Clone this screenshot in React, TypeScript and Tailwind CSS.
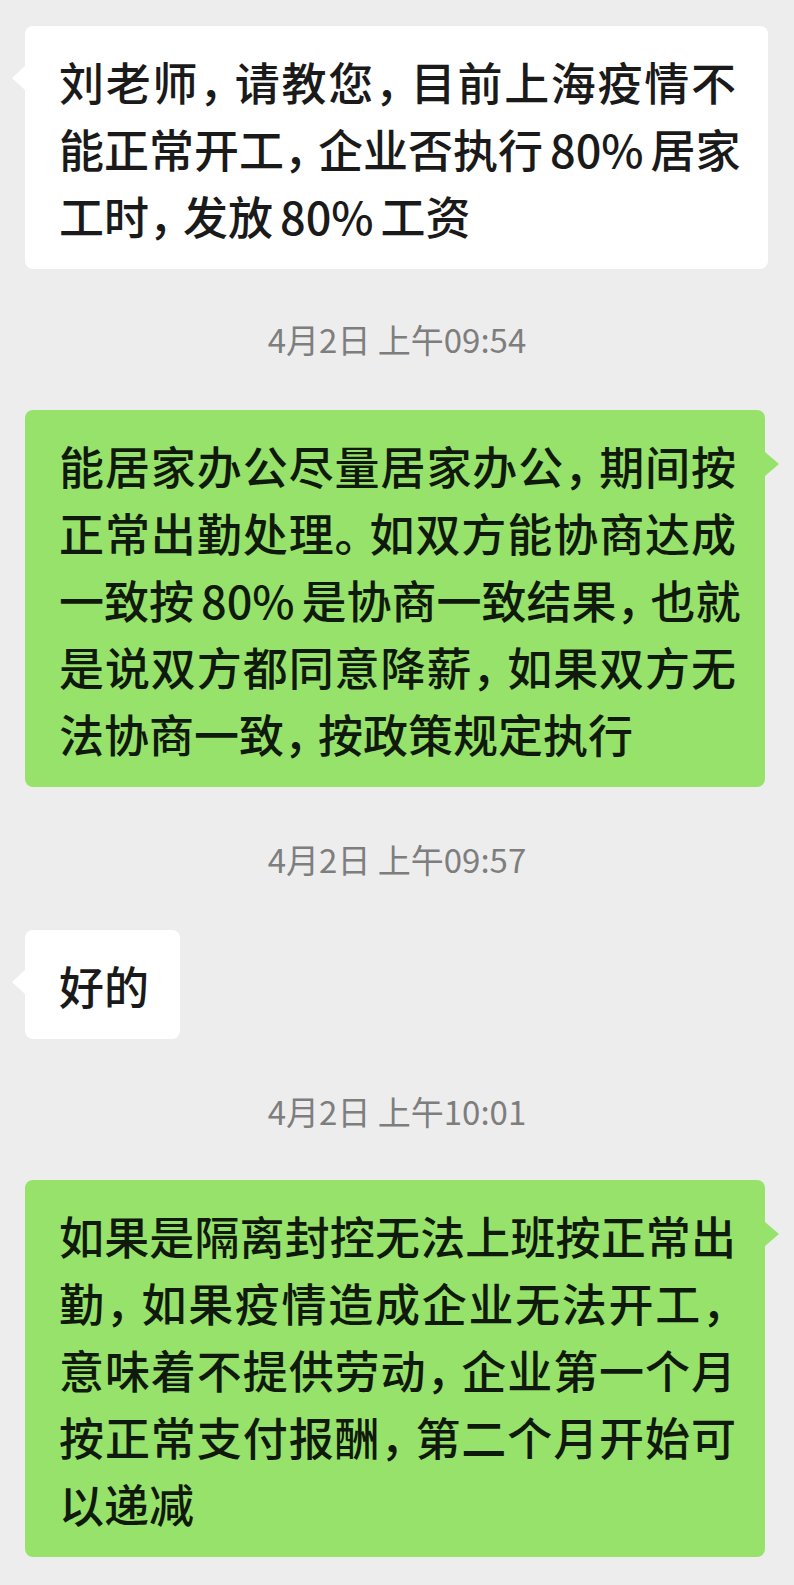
import React from 'react';

const FONT = '"Noto Sans CJK SC", "Noto Sans", sans-serif';

type Msg =
  | { kind: 'time'; text: string; mt: string }
  | { kind: 'in' | 'out'; lines: string[]; w: string; mt: string };

const messages: Msg[] = [
  {
    kind: 'in',
    w: 'w-[743px]',
    mt: 'mt-[26px]',
    lines: ['刘老师，请教您，目前上海疫情不', '能正常开工，企业否执行80%居家', '工时，发放80%工资'],
  },
  { kind: 'time', text: '4月2日 上午09:54', mt: 'mt-[51px]' },
  {
    kind: 'out',
    w: 'w-[740px]',
    mt: 'mt-[50px]',
    lines: [
      '能居家办公尽量居家办公，期间按',
      '正常出勤处理。如双方能协商达成',
      '一致按80%是协商一致结果，也就',
      '是说双方都同意降薪，如果双方无',
      '法协商一致，按政策规定执行',
    ],
  },
  { kind: 'time', text: '4月2日 上午09:57', mt: 'mt-[53px]' },
  { kind: 'in', w: 'w-[155px]', mt: 'mt-[50px]', lines: ['好的'] },
  { kind: 'time', text: '4月2日 上午10:01', mt: 'mt-[53px]' },
  {
    kind: 'out',
    w: 'w-[740px]',
    mt: 'mt-[48px]',
    lines: [
      '如果是隔离封控无法上班按正常出',
      '勤，如果疫情造成企业无法开工，',
      '意味着不提供劳动，企业第一个月',
      '按正常支付报酬，第二个月开始可',
      '以递减',
    ],
  },
];

// punctuation is squeezed a bit and "80%" gets some air, like the phone's renderer
function renderLine(s: string) {
  return s.split(/(，|。|80%)/).map((part, i) => {
    if (part === '，' || part === '。') {
      return (
        <span key={i} className="tracking-[-11px]">
          {part}
        </span>
      );
    }
    if (part === '80%') {
      return (
        <span key={i} className="mx-[7px]">
          {part}
        </span>
      );
    }
    return part;
  });
}

const Bubble: React.FC<{ kind: 'in' | 'out'; lines: string[]; w: string; mt: string }> = ({ kind, lines, w, mt }) => {
  const green = kind === 'out';
  return (
    <div className={`relative ml-[25px] ${w} ${mt}`}>
      <div
        className={`rounded-[8px] pl-[34px] pt-[22px] pb-[20px] text-[45px] leading-[67px] font-medium whitespace-nowrap ${
          green ? 'bg-[#97e26a] text-[#101a0c]' : 'bg-white text-[#1a1a1a]'
        }`}
      >
        {lines.map((l, i) => (
          <div
            key={i}
            className={i < lines.length - 1 ? 'w-[677px] text-justify [text-align-last:justify]' : ''}
          >
            {renderLine(l)}
          </div>
        ))}
      </div>
      {green ? (
        <div className="absolute right-[-14px] top-[42px] w-0 h-0 border-y-[12px] border-y-transparent border-l-[14px] border-l-[#97e26a]" />
      ) : (
        <div className="absolute left-[-13px] top-[40px] w-0 h-0 border-y-[12px] border-y-transparent border-r-[13px] border-r-white" />
      )}
    </div>
  );
};

export default function App() {
  return (
    <div className="w-[794px] h-[1585px] bg-[#ededed] overflow-hidden flex flex-col" style={{ fontFamily: FONT }}>
      {messages.map((m, i) =>
        m.kind === 'time' ? (
          <div key={i} className={`${m.mt} h-[40px] flex items-center justify-center text-[33px] text-[#7e7e7e]`}>
            {m.text}
          </div>
        ) : (
          <Bubble key={i} kind={m.kind} lines={m.lines} w={m.w} mt={m.mt} />
        )
      )}
    </div>
  );
}
